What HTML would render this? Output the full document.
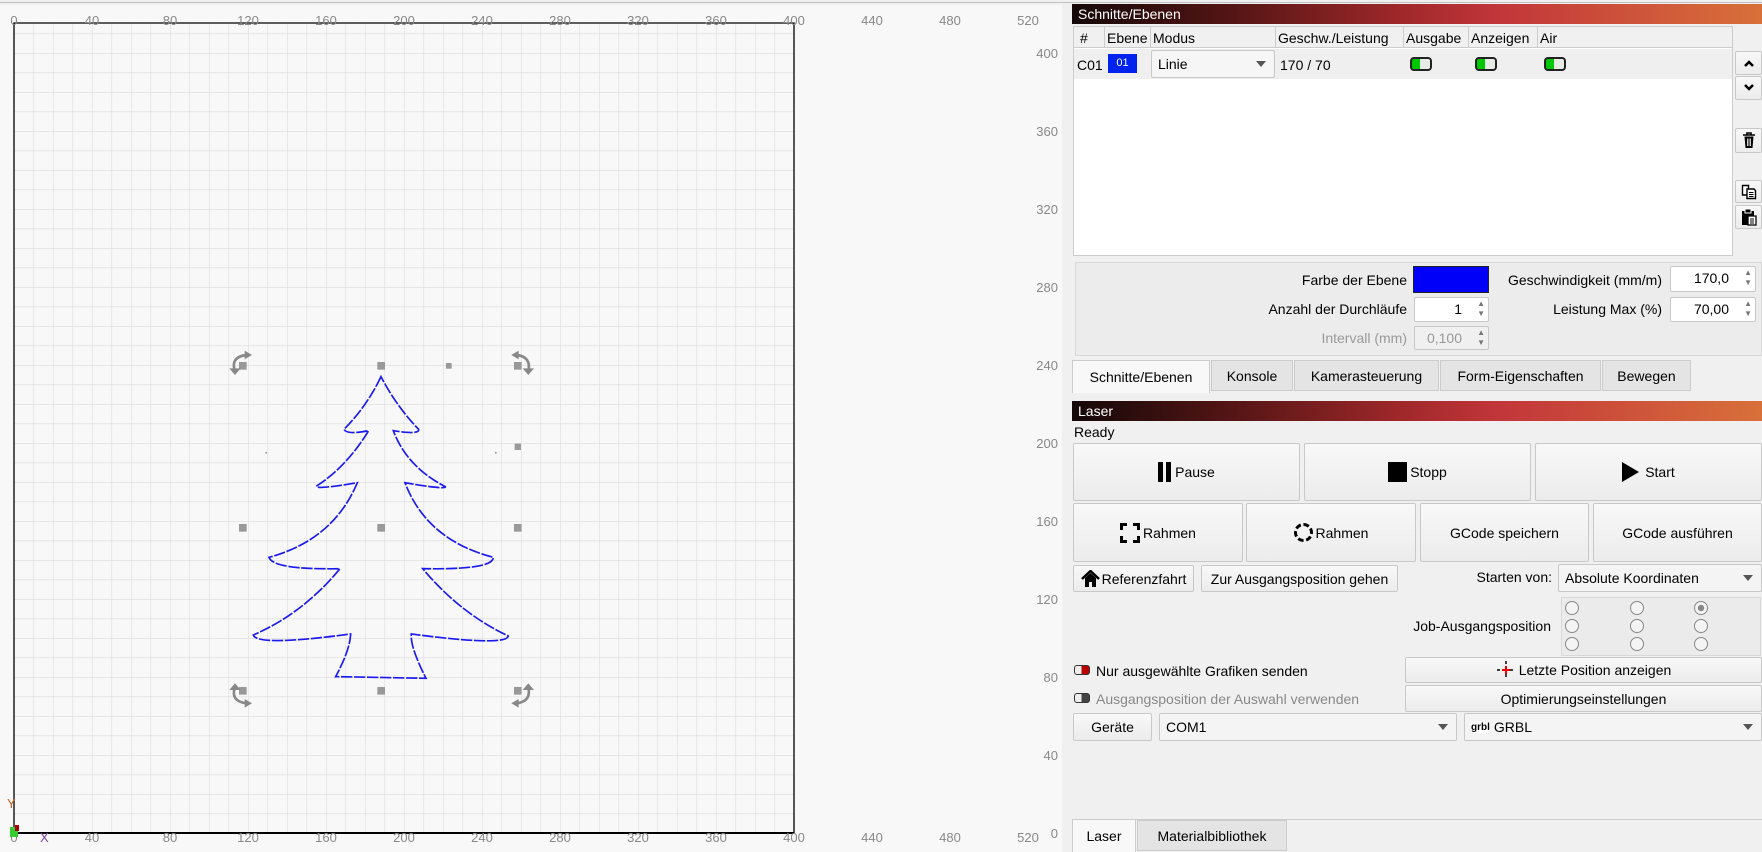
<!DOCTYPE html>
<html><head><meta charset="utf-8"><style>
*{box-sizing:border-box;margin:0;padding:0}
body{width:1762px;height:852px;overflow:hidden;background:#f0f0f0;font-family:"Liberation Sans",sans-serif;font-size:14px;color:#000;position:relative}
.a{position:absolute}
.title{position:absolute;height:20px;background:linear-gradient(90deg,#140808 0%,#5a1616 25%,#a0282a 48%,#c2363a 62%,#d8703a 100%);color:#fff;font-size:14px;line-height:20px;padding-left:6px}
.btn{position:absolute;background:linear-gradient(#f8f8f8,#ececec);border:1px solid #c8c8c8;border-radius:2px;display:flex;align-items:center;justify-content:center;font-size:14px}
.combo{position:absolute;background:#f4f4f4;border:1px solid #c8c8c8;border-radius:2px;font-size:14px;display:flex;align-items:center;padding-left:6px}
.combo:after{content:"";position:absolute;right:8px;top:50%;margin-top:-3px;border:5px solid transparent;border-top:6px solid #555;border-bottom:0}
.spin{position:absolute;background:#fff;border:1px solid #c8c8c8;border-radius:2px;font-size:14px;text-align:right;padding-right:26px;line-height:22px}
.spin:after{content:"▲\A▼";white-space:pre;position:absolute;right:3px;top:1px;font-size:8px;line-height:10px;color:#777}
.tog{position:absolute;width:22px;height:14px;border:2px solid #222;border-radius:4px;background:linear-gradient(90deg,#00c800 45%,#e4ece4 45%)}
.tab{position:absolute;background:#e4e4e4;border:1px solid #ccc;font-size:14px;display:flex;align-items:center;justify-content:center}
.rad{position:absolute;width:14px;height:14px;border:1px solid #888;border-radius:50%;background:#f4f4f4}
</style></head><body>
<div class="a" style="left:0;top:2px;width:1762px;height:1px;background:#c0c0c0"></div>
<div class="a" style="left:0;top:5px;width:1062px;height:847px;background:#f8f8f8"></div>
<svg class="a" style="left:0;top:0" width="1062" height="852">
<defs><pattern id="g" x="14" y="833" width="19.5" height="19.5" patternUnits="userSpaceOnUse"><path d="M0 0V19.5M0 0H19.5" stroke="#dcdcdc" stroke-width="1.2" fill="none"/></pattern></defs>
<rect x="14" y="23" width="780" height="810" fill="url(#g)"/>
<path d="M14 23H794V833H14Z" fill="none" stroke="#000" stroke-width="1.3"/>
<path d="M14 833H794" stroke="#000" stroke-width="2"/>
<g fill="#888" font-size="13" text-anchor="middle" font-family="Liberation Sans,sans-serif">
<text x="14" y="25">0</text><text x="92" y="25">40</text><text x="170" y="25">80</text><text x="248" y="25">120</text><text x="326" y="25">160</text><text x="404" y="25">200</text><text x="482" y="25">240</text><text x="560" y="25">280</text><text x="638" y="25">320</text><text x="716" y="25">360</text><text x="794" y="25">400</text><text x="872" y="25">440</text><text x="950" y="25">480</text><text x="1028" y="25">520</text>
<text x="14" y="842">0</text><text x="92" y="842">40</text><text x="170" y="842">80</text><text x="248" y="842">120</text><text x="326" y="842">160</text><text x="404" y="842">200</text><text x="482" y="842">240</text><text x="560" y="842">280</text><text x="638" y="842">320</text><text x="716" y="842">360</text><text x="794" y="842">400</text><text x="872" y="842">440</text><text x="950" y="842">480</text><text x="1028" y="842">520</text>
</g>
<g fill="#888" font-size="13" text-anchor="end" font-family="Liberation Sans,sans-serif">
<text x="1058" y="58">400</text><text x="1058" y="136">360</text><text x="1058" y="214">320</text><text x="1058" y="292">280</text><text x="1058" y="370">240</text><text x="1058" y="448">200</text><text x="1058" y="526">160</text><text x="1058" y="604">120</text><text x="1058" y="682">80</text><text x="1058" y="760">40</text><text x="1058" y="838">0</text>
</g>
<text x="7" y="808" fill="#c06020" font-size="13">Y</text><text x="40" y="842" fill="#8040a0" font-size="13">X</text>
<rect x="10" y="827" width="8" height="10" fill="#3c3"/><rect x="15" y="825" width="4" height="6" fill="#a00"/>
<g transform="translate(220,340) scale(0.3333)">
<path d="M483 110 Q440 200 372 268 Q380 285 446 272 Q380 380 290 438 Q285 450 412 428 Q340 600 147 652 Q160 690 360 686 Q250 820 100 885 Q110 920 392 882 Q390 930 347 1010 L618 1015 Q570 920 574 882 Q860 920 865 888 Q720 820 608 686 Q820 690 820 652 Q620 600 555 428 Q680 450 676 440 Q560 380 520 272 Q600 285 596 268 Q530 200 483 110Z" fill="none" stroke="#1a1aee" stroke-width="5" stroke-dasharray="34 5"/>
<g fill="#999"><rect x="57" y="66" width="23" height="23"/><rect x="472" y="66" width="23" height="23"/><rect x="678" y="69" width="17" height="17"/><rect x="882" y="66" width="23" height="23"/><rect x="884" y="311" width="19" height="19"/><rect x="57" y="552" width="23" height="23"/><rect x="472" y="552" width="23" height="23"/><rect x="882" y="552" width="23" height="23"/><rect x="57" y="1041" width="23" height="23"/><rect x="472" y="1041" width="23" height="23"/><rect x="882" y="1041" width="23" height="23"/><rect x="136" y="336" width="5" height="5"/><rect x="825" y="336" width="5" height="5"/></g>
<g fill="none" stroke="#888" stroke-width="8"><path d="M45 95 Q30 50 80 45"/><path d="M890 45 Q935 50 925 95"/><path d="M45 1040 Q30 1085 80 1090"/><path d="M890 1090 Q935 1085 925 1040"/></g>
<g fill="#888"><path d="M28 85 L62 85 L45 105Z"/><path d="M74 32 L74 58 L96 45Z"/><path d="M908 85 L942 85 L925 105Z"/><path d="M896 32 L896 58 L874 45Z"/><path d="M28 1050 L62 1050 L45 1030Z"/><path d="M74 1077 L74 1103 L96 1090Z"/><path d="M908 1050 L942 1050 L925 1030Z"/><path d="M896 1077 L896 1103 L874 1090Z"/></g>
</g>
</svg>

<div class="title" style="left:1072px;top:4px;width:690px">Schnitte/Ebenen</div>
<div class="a" style="left:1073px;top:26px;width:660px;height:230px;background:#fff;border:1px solid #ccc"></div>
<div class="a" style="left:1074px;top:27px;width:658px;height:21px;background:#f0f0f0;border-bottom:1px solid #ccc"></div>
<div class="a" style="left:1074px;top:49px;width:658px;height:30px;background:#efefef"></div>
<div class="a" style="top:27px;left:1104px;width:1px;height:21px;background:#ccc"></div>
<div class="a" style="top:27px;left:1150px;width:1px;height:21px;background:#ccc"></div>
<div class="a" style="top:27px;left:1275px;width:1px;height:21px;background:#ccc"></div>
<div class="a" style="top:27px;left:1403px;width:1px;height:21px;background:#ccc"></div>
<div class="a" style="top:27px;left:1468px;width:1px;height:21px;background:#ccc"></div>
<div class="a" style="top:27px;left:1537px;width:1px;height:21px;background:#ccc"></div>
<div class="a" style="top:30px;left:1080px">#</div>
<div class="a" style="top:30px;left:1107px">Ebene</div>
<div class="a" style="top:30px;left:1153px">Modus</div>
<div class="a" style="top:30px;left:1278px">Geschw./Leistung</div>
<div class="a" style="top:30px;left:1406px">Ausgabe</div>
<div class="a" style="top:30px;left:1471px">Anzeigen</div>
<div class="a" style="top:30px;left:1540px">Air</div>
<div class="a" style="top:57px;left:1077px">C01</div>
<div class="a" style="top:54px;left:1108px;width:29px;height:19px;background:#0022ee;color:#fff;font-size:11px;text-align:center;line-height:19px">01</div>
<div class="combo" style="left:1151px;top:50px;width:124px;height:28px;background:#f6f6f6">Linie</div>
<div class="a" style="top:57px;left:1280px">170 / 70</div>
<div class="tog" style="left:1410px;top:57px"></div>
<div class="tog" style="left:1475px;top:57px"></div>
<div class="tog" style="left:1544px;top:57px"></div>
<div class="btn" style="left:1735px;top:51px;width:27px;height:24px"><svg width="12" height="8"><path d="M2 7L6 3L10 7" stroke="#000" stroke-width="2.5" fill="none"/></svg></div>
<div class="btn" style="left:1735px;top:76px;width:27px;height:24px"><svg width="12" height="8"><path d="M2 1L6 5L10 1" stroke="#000" stroke-width="2.5" fill="none"/></svg></div>
<div class="btn" style="left:1735px;top:128px;width:27px;height:25px"><svg width="14" height="17"><path d="M1 3H13M5 3V1H9V3" stroke="#000" stroke-width="1.6" fill="none"/><path d="M2.5 4.5H11.5L10.5 16H3.5Z" fill="#000"/><path d="M5.5 6.5V14M7 6.5V14M8.5 6.5V14" stroke="#fff" stroke-width="0.8"/></svg></div>
<div class="btn" style="left:1735px;top:180px;width:27px;height:23px"><svg width="16" height="16"><path d="M1.5 1.5H7.5V11H1.5Z" stroke="#000" stroke-width="1.4" fill="#fff"/><path d="M6 5H13L14.5 6.5V14.5H6Z" stroke="#000" stroke-width="1.4" fill="#fff"/><path d="M8 8.5H12.5M8 10.5H12.5M8 12.5H12.5" stroke="#000"/></svg></div>
<div class="btn" style="left:1735px;top:205px;width:27px;height:24px"><svg width="16" height="18"><path d="M1 3H13V17H1Z" fill="#000"/><path d="M4 1H10V5H4Z" fill="#000" stroke="#fff"/><path d="M7 8H15V17H7Z" fill="#fff" stroke="#000" stroke-width="1.3"/><path d="M9 11H13M9 13H13M9 15H13" stroke="#000"/></svg></div>

<div class="a" style="left:1075px;top:262px;width:687px;height:94px;border:1px solid #d8d8d8;background:#ececec"></div>
<div class="a" style="top:272px;left:1260px;width:147px;text-align:right">Farbe der Ebene</div>
<div class="a" style="left:1413px;top:266px;width:76px;height:27px;background:#0000f8;border:1px solid #222"></div>
<div class="a" style="top:272px;left:1494px;width:168px;text-align:right">Geschwindigkeit (mm/m)</div>
<div class="spin" style="left:1670px;top:266px;width:86px;height:26px">170,0</div>
<div class="a" style="top:301px;left:1200px;width:207px;text-align:right">Anzahl der Durchläufe</div>
<div class="spin" style="left:1414px;top:297px;width:75px;height:25px">1</div>
<div class="a" style="top:301px;left:1494px;width:168px;text-align:right">Leistung Max (%)</div>
<div class="spin" style="left:1670px;top:297px;width:86px;height:25px">70,00</div>
<div class="a" style="top:330px;left:1200px;width:207px;text-align:right;color:#999">Intervall (mm)</div>
<div class="spin" style="left:1414px;top:326px;width:75px;height:24px;background:#f0f0f0;color:#999">0,100</div>

<div class="tab" style="left:1072px;top:360px;width:138px;height:33px;background:#f8f8f8;border-bottom:none">Schnitte/Ebenen</div>
<div class="tab" style="left:1211px;top:360px;width:82px;height:31px">Konsole</div>
<div class="tab" style="left:1294px;top:360px;width:145px;height:31px">Kamerasteuerung</div>
<div class="tab" style="left:1440px;top:360px;width:161px;height:31px">Form-Eigenschaften</div>
<div class="tab" style="left:1602px;top:360px;width:89px;height:31px">Bewegen</div>

<div class="title" style="left:1072px;top:401px;width:690px">Laser</div>
<div class="a" style="top:424px;left:1074px">Ready</div>
<div class="btn" style="left:1073px;top:443px;width:227px;height:58px"><span style="display:inline-block;width:5px;height:20px;background:#000;margin-right:3px"></span><span style="display:inline-block;width:5px;height:20px;background:#000;margin-right:4px"></span>Pause</div>
<div class="btn" style="left:1304px;top:443px;width:227px;height:58px"><span style="display:inline-block;width:19px;height:20px;background:#000;margin-right:3px"></span>Stopp</div>
<div class="btn" style="left:1535px;top:443px;width:227px;height:58px"><span style="display:inline-block;border-left:17px solid #000;border-top:10px solid transparent;border-bottom:10px solid transparent;margin-right:6px"></span>Start</div>
<div class="btn" style="left:1073px;top:503px;width:170px;height:59px"><svg width="20" height="20" style="margin-right:3px"><path d="M1.5 7V1.5H7M13 1.5H18.5V7M18.5 13V18.5H13M7 18.5H1.5V13" stroke="#000" stroke-width="3" fill="none"/></svg>Rahmen</div>
<div class="btn" style="left:1246px;top:503px;width:170px;height:59px"><span style="display:inline-block;width:19px;height:19px;border:3px dashed #000;border-radius:50%;margin-right:3px"></span>Rahmen</div>
<div class="btn" style="left:1420px;top:503px;width:169px;height:59px">GCode speichern</div>
<div class="btn" style="left:1593px;top:503px;width:169px;height:59px">GCode ausführen</div>
<div class="btn" style="left:1073px;top:565px;width:121px;height:27px"><svg width="19" height="18" style="margin-right:2px"><path d="M1 9L9.5 1L18 9" stroke="#000" stroke-width="2.5" fill="none"/><path d="M4 8V17H8V12H11V17H15V8L9.5 3Z" fill="#000"/></svg>Referenzfahrt</div>
<div class="btn" style="left:1201px;top:565px;width:197px;height:27px">Zur Ausgangsposition gehen</div>
<div class="a" style="top:569px;left:1420px;width:132px;text-align:right">Starten von:</div>
<div class="combo" style="left:1558px;top:564px;width:204px;height:28px">Absolute Koordinaten</div>
<div class="a" style="top:618px;left:1380px;width:171px;text-align:right">Job-Ausgangsposition</div>
<div class="a" style="left:1561px;top:597px;width:200px;height:59px;border:1px solid #d8d8d8;background:#ebebeb"></div>
<div class="rad" style="left:1565px;top:601px"></div><div class="rad" style="left:1630px;top:601px"></div><div class="rad" style="left:1694px;top:601px;background:radial-gradient(#888 35%,#f4f4f4 40%)"></div>
<div class="rad" style="left:1565px;top:619px"></div><div class="rad" style="left:1630px;top:619px"></div><div class="rad" style="left:1694px;top:619px"></div>
<div class="rad" style="left:1565px;top:637px"></div><div class="rad" style="left:1630px;top:637px"></div><div class="rad" style="left:1694px;top:637px"></div>
<div class="a" style="left:1074px;top:665px;width:16px;height:10px;border:1.5px solid #333;border-radius:3px;background:linear-gradient(90deg,#eee 45%,#b00 45%)"></div>
<div class="a" style="top:663px;left:1096px">Nur ausgewählte Grafiken senden</div>
<div class="a" style="left:1074px;top:693px;width:16px;height:10px;border:1.5px solid #333;border-radius:3px;background:linear-gradient(90deg,#eee 45%,#444 45%)"></div>
<div class="a" style="top:691px;left:1096px;color:#888">Ausgangsposition der Auswahl verwenden</div>
<div class="btn" style="left:1405px;top:657px;width:357px;height:26px"><svg width="20" height="20" style="margin-right:3px"><path d="M1 10H6M14 10H19M10 1V6M10 14V19" stroke="#000" stroke-width="1.5" stroke-dasharray="3 2"/><path d="M6 10H14M10 6V14" stroke="#e00" stroke-width="2"/></svg>Letzte Position anzeigen</div>
<div class="btn" style="left:1405px;top:685px;width:357px;height:27px">Optimierungseinstellungen</div>
<div class="btn" style="left:1073px;top:713px;width:79px;height:28px">Geräte</div>
<div class="combo" style="left:1159px;top:713px;width:298px;height:28px">COM1</div>
<div class="combo" style="left:1464px;top:713px;width:298px;height:28px"><span style="font-size:10px;font-weight:bold;margin-right:4px;background:#fff">grbl</span>GRBL</div>
<div class="a" style="left:1072px;top:819px;width:690px;height:1px;background:#ccc"></div>
<div class="tab" style="left:1072px;top:819px;width:64px;height:33px;background:#f8f8f8;border-bottom:none">Laser</div>
<div class="tab" style="left:1137px;top:820px;width:150px;height:31px">Materialbibliothek</div>
</body></html>
